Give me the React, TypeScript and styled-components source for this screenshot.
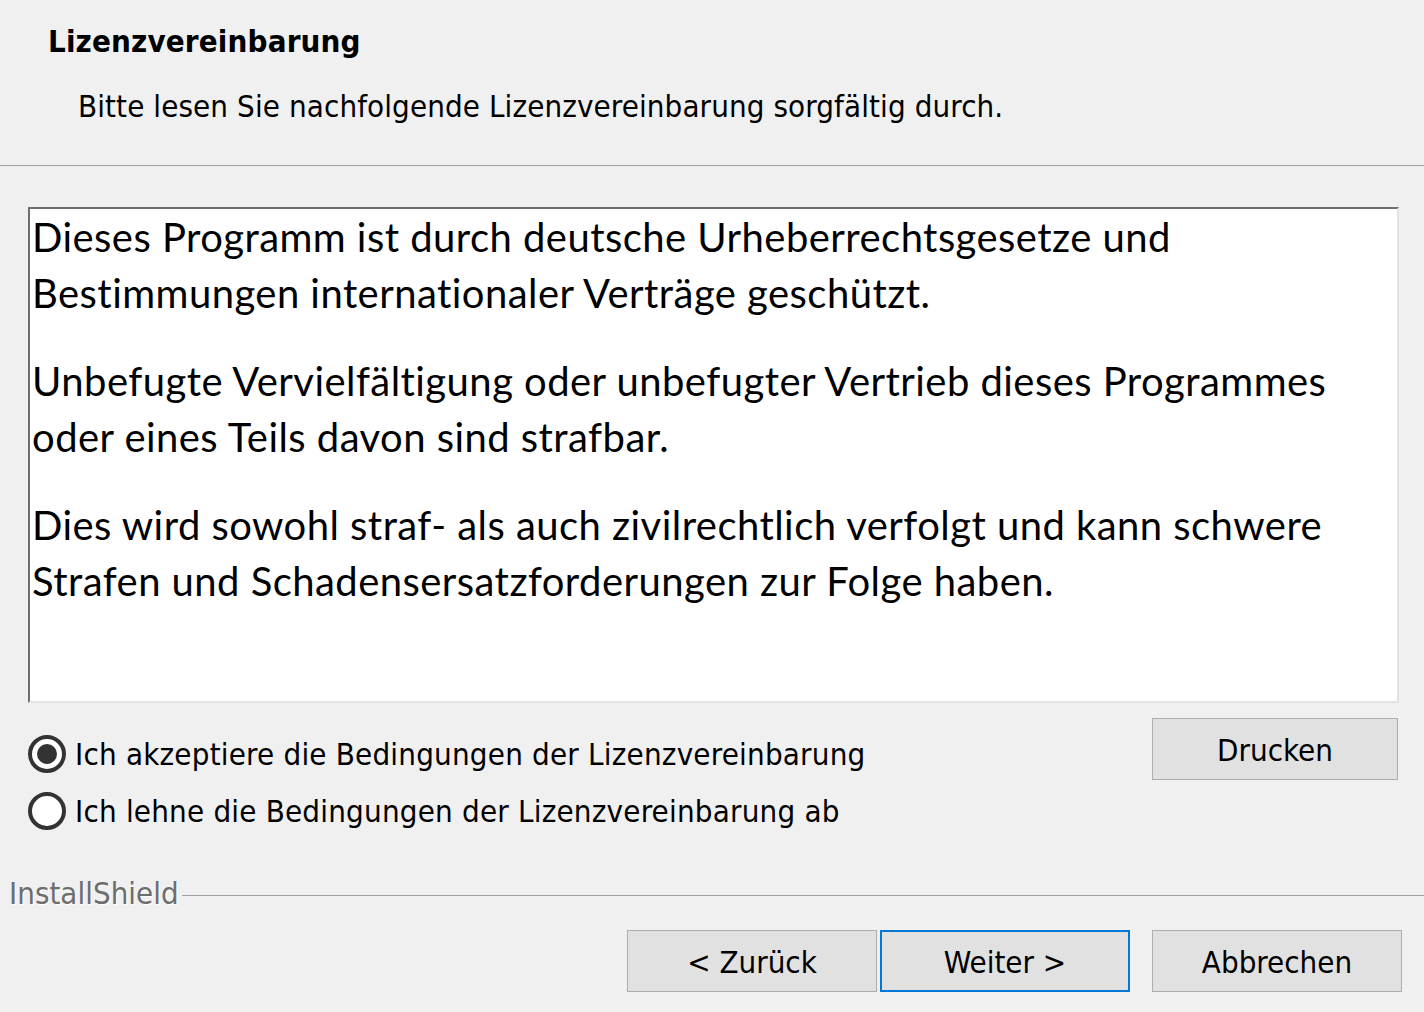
import React from "react";
import styled, { createGlobalStyle } from "styled-components";

const GlobalStyle = createGlobalStyle`
  html, body {
    margin: 0;
    padding: 0;
    background: #f0f0f0;
  }
  body {
    width: 1424px;
    height: 1012px;
    overflow: hidden;
  }
`;

const uiFont = `"DejaVu Sans Condensed", "DejaVu Sans", "Liberation Sans", sans-serif`;

const Dialog = styled.div`
  width: 1424px;
  height: 1012px;
  background: #f0f0f0;
  display: flex;
  flex-direction: column;
  font-family: ${uiFont};
  font-stretch: condensed;
  color: #000;
`;

const Header = styled.header`
  box-sizing: border-box;
  height: 166px;
  padding: 23px 0 0 48px;
  border-bottom: 1px solid #a0a0a0;
  display: flex;
  flex-direction: column;
  gap: 29px;
`;

const Title = styled.h1`
  margin: 0;
  font-size: 31px;
  line-height: 36px;
  font-weight: bold;
  letter-spacing: 0.15px;
`;

const Subtitle = styled.p`
  margin: 0 0 0 30px;
  font-size: 31px;
  line-height: 36px;
  font-weight: normal;
  letter-spacing: 0.1px;
`;

const Body = styled.main`
  display: flex;
  flex-direction: column;
  padding: 41px 0 0 28px;
`;

const LicenseBox = styled.div`
  box-sizing: border-box;
  width: 1371px;
  height: 496px;
  background: #fff;
  border-top: 2px solid #6e6e6e;
  border-left: 2px solid #6e6e6e;
  border-right: 2px solid #e3e3e3;
  border-bottom: 2px solid #e3e3e3;
  padding: 0 0 0 2px;
  font-family: "Lato", "Open Sans", sans-serif;
  font-stretch: normal;
  font-size: 40px;
  letter-spacing: 0.45px;
  font-variant-ligatures: none;
  line-height: 56px;
  overflow: hidden;
`;

const Paragraph = styled.p`
  margin: 0 0 32px 0;
`;

const OptionsRow = styled.div`
  display: flex;
  justify-content: space-between;
  align-items: flex-start;
  width: 1370px;
  margin-top: 15px;
`;

const RadioList = styled.div`
  display: flex;
  flex-direction: column;
  gap: 19px;
  margin-top: 17px;
`;

const RadioRow = styled.label`
  display: flex;
  align-items: center;
  gap: 9px;
  font-size: 31px;
  line-height: 38px;
  letter-spacing: 0.2px;
`;

const RadioCircle = styled.span<{ $checked?: boolean }>`
  box-sizing: border-box;
  width: 38px;
  height: 38px;
  border-radius: 50%;
  border: 4px solid #333;
  background: #fff;
  display: flex;
  align-items: center;
  justify-content: center;
  flex: none;
  &::after {
    content: "";
    width: 20px;
    height: 20px;
    border-radius: 50%;
    background: #333;
    display: ${(p) => (p.$checked ? "block" : "none")};
  }
`;

const Button = styled.button<{ $focused?: boolean; $width?: number }>`
  box-sizing: border-box;
  width: ${(p) => p.$width ?? 250}px;
  height: 62px;
  background: #e1e1e1;
  border: ${(p) => (p.$focused ? "2px solid #0078d7" : "1px solid #adadad")};
  border-radius: 0;
  font-family: ${uiFont};
  font-stretch: condensed;
  font-size: 31px;
  color: #000;
  padding: 2px 0 0 0;
  display: flex;
  align-items: center;
  justify-content: center;
`;

const Footer = styled.footer`
  display: flex;
  flex-direction: column;
  margin-top: 45px;
`;

const BrandRow = styled.div`
  display: flex;
  align-items: center;
  padding-left: 9px;
`;

const Brand = styled.span`
  font-size: 31px;
  line-height: 36px;
  color: #6d6d6d;
  text-shadow: 1px 1px 0 #ffffff;
`;

const BrandLine = styled.div`
  flex: 1;
  height: 1px;
  background: #a0a0a0;
  margin-top: 4px;
  margin-left: 3px;
`;

const ButtonBar = styled.div`
  display: flex;
  justify-content: flex-end;
  padding-right: 22px;
  margin-top: 19px;
`;

const NavGroup = styled.div`
  display: flex;
  gap: 3px;
  margin-right: 22px;
`;

export default function App() {
  return (
    <>
      <GlobalStyle />
      <Dialog>
        <Header>
          <Title>Lizenzvereinbarung</Title>
          <Subtitle>Bitte lesen Sie nachfolgende Lizenzvereinbarung sorgfältig durch.</Subtitle>
        </Header>
        <Body>
          <LicenseBox>
            <Paragraph>
              Dieses Programm ist durch deutsche Urheberrechtsgesetze und
              <br />
              Bestimmungen internationaler Verträge geschützt.
            </Paragraph>
            <Paragraph>
              Unbefugte Vervielfältigung oder unbefugter Vertrieb dieses Programmes
              <br />
              oder eines Teils davon sind strafbar.
            </Paragraph>
            <Paragraph>
              Dies wird sowohl straf- als auch zivilrechtlich verfolgt und kann schwere
              <br />
              Strafen und Schadensersatzforderungen zur Folge haben.
            </Paragraph>
          </LicenseBox>
          <OptionsRow>
            <RadioList>
              <RadioRow>
                <RadioCircle $checked />
                Ich akzeptiere die Bedingungen der Lizenzvereinbarung
              </RadioRow>
              <RadioRow>
                <RadioCircle />
                Ich lehne die Bedingungen der Lizenzvereinbarung ab
              </RadioRow>
            </RadioList>
            <Button $width={246}>Drucken</Button>
          </OptionsRow>
        </Body>
        <Footer>
          <BrandRow>
            <Brand>InstallShield</Brand>
            <BrandLine />
          </BrandRow>
          <ButtonBar>
            <NavGroup>
              <Button>&lt; Zurück</Button>
              <Button $focused>Weiter &gt;</Button>
            </NavGroup>
            <Button>Abbrechen</Button>
          </ButtonBar>
        </Footer>
      </Dialog>
    </>
  );
}
